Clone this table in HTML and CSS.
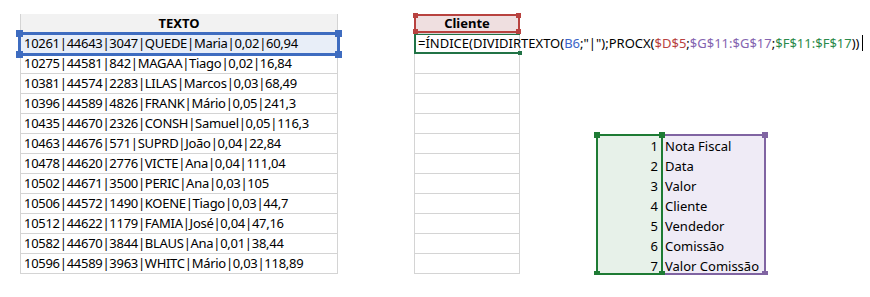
FILE: index.html
```html
<!DOCTYPE html>
<html lang="pt">
<head>
<meta charset="utf-8">
<link rel="stylesheet" href="styles.css">
</head>
<body>
<div class="sheet">
  <div class="texto-table">
    <div class="cell head">TEXTO</div>
    <div class="cell row sel">10261|44643|3047|QUEDE|Maria|0,02|60,94
      <span class="selbox"><i class="h tl"></i><i class="h tr"></i><i class="h bl"></i><i class="h br"></i></span>
    </div>
    <div class="cell row">10275|44581|842|MAGAA|Tiago|0,02|16,84</div>
    <div class="cell row">10381|44574|2283|LILAS|Marcos|0,03|68,49</div>
    <div class="cell row">10396|44589|4826|FRANK|Mário|0,05|241,3</div>
    <div class="cell row">10435|44670|2326|CONSH|Samuel|0,05|116,3</div>
    <div class="cell row">10463|44676|571|SUPRD|João|0,04|22,84</div>
    <div class="cell row">10478|44620|2776|VICTE|Ana|0,04|111,04</div>
    <div class="cell row">10502|44671|3500|PERIC|Ana|0,03|105</div>
    <div class="cell row">10506|44572|1490|KOENE|Tiago|0,03|44,7</div>
    <div class="cell row">10512|44622|1179|FAMIA|José|0,04|47,16</div>
    <div class="cell row">10582|44670|3844|BLAUS|Ana|0,01|38,44</div>
    <div class="cell row">10596|44589|3963|WHITC|Mário|0,03|118,89</div>
  </div>

  <div class="cliente-table">
    <div class="cell head-c">Cliente
      <span class="redbox"><i class="h tl"></i><i class="h tr"></i><i class="h bl"></i><i class="h br"></i></span>
    </div>
    <div class="cell edit"><span class="formula">=ÍNDICE(DIVIDIRTEXTO(<span class="ref-b">B6</span>;"|");PROCX(<span class="ref-r">$D$5</span>;<span class="ref-p">$G$11:$G$17</span>;<span class="ref-g">$F$11:$F$17</span>))<span class="caret"></span></span>
      <span class="greenbox"><i class="h br"></i></span>
    </div>
    <div class="cell"></div>
    <div class="cell"></div>
    <div class="cell"></div>
    <div class="cell"></div>
    <div class="cell"></div>
    <div class="cell"></div>
    <div class="cell"></div>
    <div class="cell"></div>
    <div class="cell"></div>
    <div class="cell"></div>
    <div class="cell"></div>
  </div>

  <div class="lookup">
    <div class="col nums">
      <div class="v">1</div><div class="v">2</div><div class="v">3</div><div class="v">4</div><div class="v">5</div><div class="v">6</div><div class="v">7</div>
      <i class="h tl"></i><i class="h tr"></i><i class="h bl"></i><i class="h br"></i>
    </div>
    <div class="col names">
      <div class="v">Nota Fiscal</div><div class="v">Data</div><div class="v">Valor</div><div class="v">Cliente</div><div class="v">Vendedor</div><div class="v">Comissão</div><div class="v">Valor Comissão</div>
      <i class="h tr"></i><i class="h br"></i>
    </div>
  </div>
</div>
</body>
</html>
```

FILE: styles.css
```css
* { box-sizing: border-box; }
html, body { margin: 0; padding: 0; background: #fff; }
body {
  font-family: "Noto Sans", "Open Sans", sans-serif;
  font-size: 13px;
  color: #000;
}
.sheet {
  display: flex;
  align-items: flex-start;
  padding: 14px 0 0 20px;
}
.texto-table {
  width: 318px;
  border-left: 1px solid #d4d4d4;
  border-right: 1px solid #d4d4d4;
}
.cell {
  position: relative;
  height: 20px;
  line-height: 19px;
  border-bottom: 1px solid #d4d4d4;
  padding-left: 3px;
  white-space: nowrap;
}
.row { letter-spacing: -0.28px; }
.head {
  background: #f2f2f2;
  font-weight: bold;
  text-align: center;
  padding-left: 0;
}
.sel { background: #e8eef8; }
.selbox {
  position: absolute;
  left: -3px; right: -3px; top: -2px; bottom: -3px;
  border: 3px solid #3e6cc0;
}
.h {
  position: absolute;
  width: 7px; height: 7px;
  background: #3e6cc0;
}
.selbox .tl { left: -5px; top: -5px; }
.selbox .tr { right: -5px; top: -5px; }
.selbox .bl { left: -5px; bottom: -5px; }
.selbox .br { right: -5px; bottom: -5px; }

.cliente-table {
  width: 106px;
  margin-left: 76px;
  border-left: 1px solid #d4d4d4;
  border-right: 1px solid #d4d4d4;
}
.head-c {
  background: #efdfe0;
  font-weight: bold;
  text-align: center;
  padding-left: 0;
}
.redbox {
  position: absolute;
  left: -1px; right: -1px; top: 0; bottom: 0;
  border: 2px solid #b8423f;
}
.redbox .h { background: #b8423f; width: 5px; height: 5px; }
.redbox .tl { left: -3px; top: -3px; }
.redbox .tr { right: -3px; top: -3px; }
.redbox .bl { left: -3px; bottom: -3px; }
.redbox .br { right: -3px; bottom: -3px; }

.edit { overflow: visible; background: #fff; }
.formula { position: relative; z-index: 2; }
.greenbox {
  position: absolute;
  left: -1px; right: -1px; top: 0; bottom: -1px;
  border-left: 2px solid #217346;
  border-bottom: 2px solid #217346;
  border-top: 1px solid #217346;
}
.greenbox .h { background: #217346; width: 4px; height: 4px; right: -2px; bottom: -3px; }
.caret {
  display: inline-block;
  width: 1px; height: 16px;
  background: #000;
  vertical-align: -3px;
  margin-left: 2px;
}
.ref-b { color: #3b64c8; }
.ref-r { color: #b8423f; }
.ref-p { color: #8464b0; }
.ref-g { color: #2b8a4a; }

.lookup {
  display: flex;
  margin-left: 76px;
  margin-top: 120px;
}
.col {
  position: relative;
  height: 141px;
}
.col .v { height: 20px; line-height: 20px; white-space: nowrap; }
.nums {
  width: 67px;
  background: #e7f1e9;
  border: 2px solid #1e7b34;
  text-align: right;
  padding-right: 3px;
  z-index: 2;
}
.names {
  width: 103px;
  background: #efebf6;
  border: 2px solid #8064a2;
  border-left: none;
  padding-left: 2px;
}
.nums .h { background: #1e7b34; width: 6px; height: 6px; }
.names .h { background: #8064a2; width: 6px; height: 6px; }
.col .tl { left: -4px; top: -4px; }
.col .tr { right: -4px; top: -4px; }
.col .bl { left: -4px; bottom: -4px; }
.col .br { right: -4px; bottom: -4px; }
```
